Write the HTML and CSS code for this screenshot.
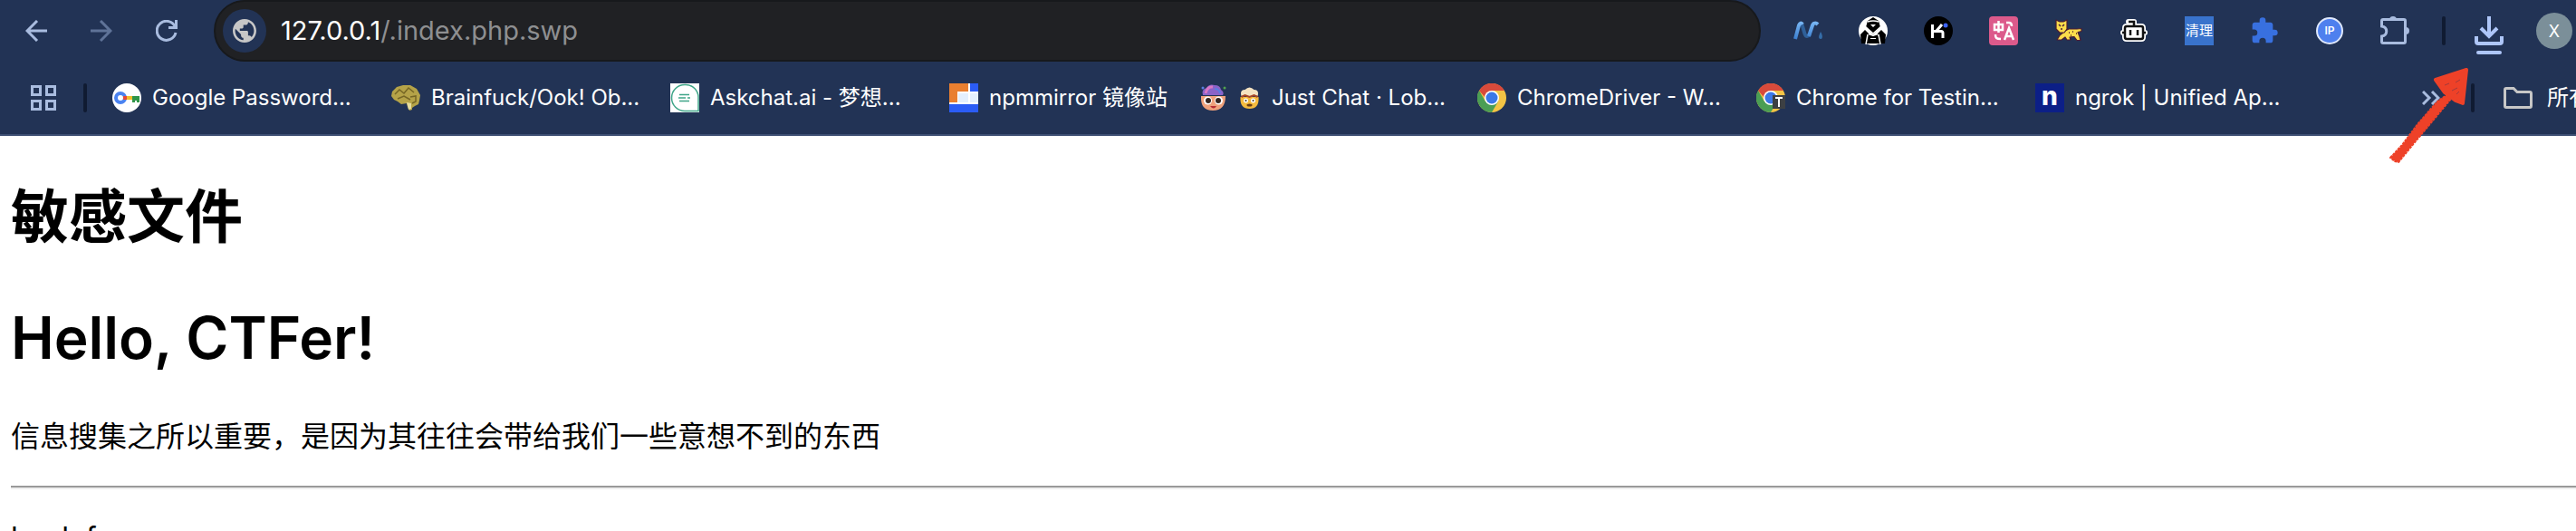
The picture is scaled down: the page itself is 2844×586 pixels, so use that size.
FILE: index.html
```html
<!DOCTYPE html>
<html lang="zh-CN">
<head>
<meta charset="utf-8">
<title>敏感文件</title>
<link rel="stylesheet" href="styles.css">
</head>
<body>
<header class="chrome">
  <div class="toolbar">
    <nav class="nav" aria-label="导航">
      <button class="icon-btn" aria-label="后退"><svg width="24" height="24" viewBox="0 0 24 24" fill="none" stroke="#a9bcdf" stroke-width="3"><path d="M24 12H2M13 1 2 12l11 11"/></svg></button>
      <button class="icon-btn" aria-label="前进"><svg width="24" height="24" viewBox="0 0 24 24" fill="none" stroke="#5f7398" stroke-width="3"><path d="M0 12h22M11 1l11 11-11 11"/></svg></button>
      <button class="icon-btn" aria-label="重新加载"><svg width="24" height="24" viewBox="0 0 24 24" fill="none" stroke="#a9bcdf" stroke-width="3"><path d="M21.500 8A10.500 10.500 0 1 0 22 14M22.500 0v8.500H14"/></svg></button>
    </nav>
    <div class="omnibox">
      <span class="site"><svg width="26" height="26" viewBox="2 2 20 20" fill="#c7c7c7"><path d="M12 2C6.480 2 2 6.480 2 12s4.480 10 10 10 10-4.480 10-10S17.520 2 12 2zm-1 17.930c-3.950-.49-7-3.850-7-7.930 0-.62.080-1.210.210-1.790L9 15v1c0 1.100.9 2 2 2v1.930zm6.900-2.540c-.26-.81-1-1.390-1.900-1.390h-1v-3c0-.55-.45-1-1-1H8v-2h2c.55 0 1-.45 1-1V7h2c1.100 0 2-.9 2-2v-.41c2.930 1.190 5 4.060 5 7.410 0 2.080-.8 3.970-2.100 5.390z"/></svg></span>
      <div class="url" role="textbox" aria-label="地址" tabindex="0">127.0.0.1<span class="path">/.index.php.swp</span></div>
    </div>
    <div class="extensions">
      <button class="icon-btn" aria-label="N"><svg width="32" height="32" viewBox="0 0 32 32" fill="none"><defs><linearGradient id="nb" gradientUnits="userSpaceOnUse" x1="0" y1="6" x2="0" y2="25"><stop stop-color="#7ab8f5"/><stop offset="1" stop-color="#3b7fd0"/></linearGradient></defs><path d="M7 8c4-2 4 14 8 14 2 0 3-2 3-4" stroke="#2f6099" stroke-width="4"/><path d="M2 25 6 10c1-3 3-3 4-1M17 22l4-12c1-3 4-3 6-1" stroke="url(#nb)" stroke-width="4"/><path d="M30 17c-3 6-2 8 0 8s3-3 0-8z" fill="#356da8"/></svg></button>
      <button class="icon-btn" aria-label="黑客"><svg width="32" height="32" viewBox="0 0 32 32"><circle cx="16" cy="16" r="16" fill="#fff"/><path d="M16 1 10 5 8 12l8 8 8-8-2-7z"/><path d="M2 20l5-5 4 4-3 11H3zM30 20l-5-5-4 4 3 11h5zM10 20l6 2 6-2 2 10H8z"/><path d="M10 6q6-2 12 0M7 11l9 8 9-8M8 31l2-11M24 31l-2-11" fill="none" stroke="#fff" stroke-width="1.500"/><path d="M13 9h6l-3 3zM13 24h6v1h-6z" fill="#fff"/></svg></button>
      <button class="icon-btn" aria-label="K"><svg width="32" height="32" viewBox="0 0 32 32"><circle cx="16" cy="16" r="16"/><path d="M9.500 9v15M10 16.500h9c2 0 2 1 2 2V24M14 16l6-7" fill="none" stroke="#fff" stroke-width="3"/><circle cx="24" cy="10" r="2.500" fill="#3d63f2"/></svg></button>
      <button class="icon-btn" aria-label="翻译"><svg width="32" height="32" viewBox="0 0 32 32"><rect width="32" height="32" rx="4" fill="#dc5a8b"/><path d="M6 9h9v6H6zM10.500 5v13M19 7h3c2 0 3 1 3 4M7 20c0 4 1 5 6 5M17 26l5-13 5 13M19 22h6" fill="none" stroke="#fff" stroke-width="2.500"/></svg></button>
      <button class="icon-btn" aria-label="猎豹"><svg width="32" height="32" viewBox="0 0 32 32"><g fill="#fbdc4b" stroke="#4c1d32" stroke-width="1.200" stroke-linejoin="round"><path d="M12 16l4-2h9l5-.5v3l-4 1 2 5 1 4h-4l-3-4-5 .5 1 3h-4l-2-3-4 3H3l3-5z"/><path d="M2 4l4 2h4l4-2v10l-3 4H6l-4-4z"/></g><path d="M5 9l2 2M11 9l-2 2M8 13v2M16 18h1M20 17h1M24 19h1M18 21h1" stroke="#4c1d32" stroke-width="1.500"/></svg></button>
      <button class="icon-btn" aria-label="机器人"><svg width="32" height="32" viewBox="0 0 32 32"><path d="M10 6h6v5M8 11h16q2 0 2 2v10q0 2-2 2H8q-2 0-2-2V13q0-2 2-2zM6 18H4M26 18h2" fill="#fff" stroke="#fff" stroke-width="6" stroke-linejoin="round" stroke-linecap="round"/><path d="M10 6h6v5M8 11h16q2 0 2 2v10q0 2-2 2H8q-2 0-2-2V13q0-2 2-2zM6 18H3M26 18h3M12 15v6M20 15v6" fill="none" stroke="#111" stroke-width="2.500"/></svg></button>
      <button class="clean">清理</button>
      <button class="icon-btn" aria-label="拼图"><svg width="32" height="32" viewBox="0 0 24 24" fill="#3870df"><path d="M20.500 11H19V7c0-1.100-.9-2-2-2h-4V3.500a2.500 2.500 0 0 0-5 0V5H4c-1.100 0-2 .9-2 2v3.800h1.500a2.700 2.700 0 0 1 0 5.400H2V20c0 1.100.9 2 2 2h3.800v-1.500a2.700 2.700 0 0 1 5.400 0V22H17c1.100 0 2-.9 2-2v-4h1.500a2.500 2.500 0 0 0 0-5z"/></svg></button>
      <button class="ip">IP</button>
      <button class="icon-btn" aria-label="扩展程序"><svg width="32" height="32" viewBox="0 0 32 32"><path d="M3 4.500h23q1.500 0 1.500 1.500v23q0 1.500-1.500 1.500H3q-1.500 0-1.500-1.500v-6c7-1 7-10 0-11V6q0-1.500 1.500-1.500z" transform="translate(0 -1)" fill="none" stroke="#a9bcdf" stroke-width="3"/><path d="M10 4a4 4 0 0 1 8 0zM28 12a4 4 0 0 1 0 8z" fill="#a9bcdf"/></svg></button>
    </div>
    <span class="divider"></span>
    <button class="icon-btn download" aria-label="下载"><svg width="32" height="42" viewBox="0 0 32 42" fill="none" stroke="#aec6f8" stroke-width="4"><path d="M16 0v21M7 13l9 9 9-9M2 22v6q0 2 2 2h24q2 0 2-2v-6"/><path d="M4 40h24" stroke-linecap="round"/></svg></button>
    <button class="avatar">X</button>
  </div>
  <nav class="bookmarks" aria-label="书签">
    <button class="icon-btn apps" aria-label="应用"><svg width="28" height="28" viewBox="0 0 28 28" fill="none" stroke="#a9bcdf" stroke-width="3"><path d="M1.500 1.500h9v9h-9zM17.500 1.500h9v9h-9zM1.500 17.500h9v9h-9zM17.500 17.500h9v9h-9z"/></svg></button>
    <span class="divider"></span>
    <div class="links">
      <a href="#"><svg width="32" height="32" viewBox="0 0 32 32"><circle cx="16" cy="16" r="16" fill="#fff"/><circle cx="9" cy="16" r="5" fill="none" stroke="#4b83f0" stroke-width="4"/><path d="M12 14h4v4h-4z" fill="#e5483a"/><path d="M16 14h7v4h-7z" fill="#f4bd2a"/><path d="M22 14h8v7h-3v-2h-2v2h-3z" fill="#2f9549"/></svg><span>Google Password...</span></a>
      <a href="#"><svg width="32" height="32" viewBox="0 0 32 32"><path d="M3 18 0 14l1-5 5-5 7-2h8l7 4 4 7-1 6-1 4-4 2-3 2v2l-3 1-2-4-1-4-6 1-4-3z" fill="#b5a348"/><path d="M4 12l5-5 5 4 5-6 6 5M7 17l7-3 7 4M21 15l6-1v6l-4 2" fill="none" stroke="#756625" stroke-width="1.500"/><path d="m17 21 2 8 3-1v-6z" fill="#e5dda0"/></svg><span>Brainfuck/Ook! Ob...</span></a>
      <a href="#"><svg width="32" height="32" viewBox="0 0 32 32"><path d="M0 0h32v32H0z" fill="#fff"/><path d="M16 1.500h1A14 14 0 0 1 31 16v14.500H16a14.500 14.500 0 0 1 0-29z" fill="none" stroke="#3fa588" stroke-width="1.500"/><path d="M10 12.500h11M9 16h8M19 16h3M10 19.500h11" stroke="#3fa588" stroke-width="1.500"/></svg><span>Askchat.ai - 梦想...</span></a>
      <a class="short" href="#"><svg width="32" height="32" viewBox="0 0 32 32"><path d="M0 0h32v32H0z" fill="#fff"/><path d="M0 0h21v9H9v12H0z" fill="#e97f30"/><path d="M23 0h9v9h-9zM0 23h32v9H0z" fill="#2b5cf5"/><path d="M10 11h11v10H10zM23 11h9v10h-9z" fill="#e4effd"/></svg><span>npmmirror 镜像站</span></a>
      <a href="#"><svg width="32" height="32" viewBox="0 0 32 32"><path d="M3 14h27q0 16-14 16T3 14z" fill="#f0a27c"/><path d="M5 13q-2-6 4-8 3-5 9-3 6 0 7 5 4 3 2 6z" fill="#8a63c8"/><path d="M8 11q2-8 8-7" fill="none" stroke="#d977c4" stroke-width="3"/><path d="M18 6q5 0 6 5" fill="none" stroke="#5a7de0" stroke-width="2"/><circle cx="29" cy="5" r="1.500" fill="#52a34d"/><circle cx="5" cy="5" r="1.500" fill="#5a7de0"/><circle cx="10.500" cy="19" r="4.500" fill="#fff"/><circle cx="22.500" cy="19" r="4.500" fill="#fff"/><circle cx="11" cy="19" r="3" fill="#35251f"/><circle cx="22" cy="19" r="3" fill="#35251f"/><path d="M13 25h7q-3 5-7 0z" fill="#b82d33"/></svg><svg width="25" height="26" viewBox="0 0 24 26"><path d="M2 12h20q1 13-10 13T2 12z" fill="#f5bb3e"/><path d="M3 11q-2-7 4-7 5-5 10 0 6 0 4 7l-4-1-5 2-5-2z" fill="#f5e3c1"/><path d="M3 12l4-2 5 2 5-2 4 2" fill="none" stroke="#a8472a" stroke-width="2"/><circle cx="8" cy="16" r="2.500" fill="#fff"/><circle cx="16" cy="16" r="2.500" fill="#fff"/><circle cx="8" cy="16" r="1" fill="#432"/><circle cx="16" cy="16" r="1" fill="#432"/><ellipse cx="12" cy="21" rx="3" ry="1.500" fill="#6b3d15"/></svg><span>Just Chat · Lob...</span></a>
      <a href="#"><svg width="32" height="32" viewBox="0 0 32 32"><g id="cr"><circle cx="16" cy="16" r="16" fill="#f3c445"/><path d="M2.100 8A16 16 0 0 1 29.900 8H16v8H9z" fill="#d84a3b"/><path d="M2.100 8A16 16 0 0 0 16 32l7-12-7-4-7 4z" fill="#4b9e54"/><circle cx="16" cy="16" r="8" fill="#fff"/><circle cx="16" cy="16" r="6.500" fill="#3b78e7"/></g></svg><span>ChromeDriver - W...</span></a>
      <a href="#"><svg width="32" height="32" viewBox="0 0 32 32"><use href="#cr"/><path d="M18 13h14v15H18z" fill="#3d4043"/><path d="M21 16h8M25 16v10" stroke="#fff" stroke-width="2"/></svg><span>Chrome for Testin...</span></a>
      <a href="#"><span class="ngrok">n</span><span>ngrok | Unified Ap...</span></a>
    </div>
    <button class="icon-btn more" aria-label="更多书签"><svg width="20" height="16" viewBox="0 0 20 16" fill="none" stroke="#a9bcdf" stroke-width="3"><path d="m1 1 7 7-7 7M11 1l7 7-7 7"/></svg></button>
    <span class="divider"></span>
    <a class="all" href="#"><svg width="32" height="24" viewBox="0 0 32 24" fill="none" stroke="#c7c7c7" stroke-width="3"><path d="M3 1.500h8l4 4h14q1.500 0 1.500 1.500v14q0 1.500-1.500 1.500H3q-1.500 0-1.500-1.500V3q0-1.500 1.500-1.500z"/></svg><span>所有书签</span></a>
  </nav>
  <svg class="arrow" width="90" height="106" viewBox="0 0 90 106" fill="#ee4128" stroke="#ee4128" stroke-linejoin="round"><path d="m1 99 13-14 18-24 21-24 10-7 5 4-15 18-25 30-18 22-4-1z" stroke-width="2" stroke-dasharray="3 1"/><path d="m51 13 34-11-4 37-8-3-12-9z" stroke-width="4"/><path d="m61 19 5-2m3 8 6-3m-2-6 5-3m-4 16 3-3" stroke="#a33a3b" stroke-width="1"/></svg>
</header>
<main class="page">
  <h1>敏感文件</h1>
  <h1>Hello, CTFer!</h1>
  <p>信息搜集之所以重要，是因为其往往会带给我们一些意想不到的东西</p>
  <hr>
  <p class="next">back f</p>
</main>
</body>
</html>
```

FILE: styles.css
```css
* { box-sizing: border-box; }
html, body { margin: 0; height: 100%; }
body { display: flex; flex-direction: column; overflow: hidden; background: #fff; color: #000; font-family: Inter, "Noto Sans CJK SC", sans-serif; }
button { padding: 0; border: 0; background: none; color: inherit; font: inherit; }
a { color: inherit; text-decoration: none; }
svg { display: block; flex: none; }
.chrome { position: relative; flex: none; background: #223355; border-bottom: 2px solid #3d4f73; color: #fff; }
.toolbar { display: flex; align-items: center; height: 68px; padding-right: 4px; }
.nav { display: flex; gap: 48px; padding: 0 40px 0 28px; }
.icon-btn { display: flex; flex: none; align-items: center; justify-content: center; }
.omnibox { display: flex; flex: 1; align-items: center; gap: 16px; height: 68px; padding: 0 8px; border: 2px solid #17191c; border-radius: 34px; background: #202124; }
.site { display: flex; flex: none; align-items: center; justify-content: center; width: 48px; height: 48px; border-radius: 50%; background: #223355; }
.url { flex: 1; font-size: 29px; line-height: 36px; white-space: nowrap; }
.path { color: #8e8f91; }
.extensions { display: flex; align-items: center; gap: 40px; padding: 0 36px; }
.clean { width: 32px; height: 32px; background: #3973cc; font-size: 15px; line-height: 32px; white-space: nowrap; }
.ip { width: 30px; height: 30px; margin: 0 1px; border: 2px solid #dfe8fc; border-radius: 50%; background: #4e80ee; font-size: 12px; font-weight: 600; line-height: 24px; }
.divider { flex: none; width: 4px; height: 32px; border-radius: 2px; background: #101b32; }
.download { align-self: flex-end; margin: 0 36px 8px 32px; }
.avatar { flex: none; width: 40px; height: 40px; border-radius: 50%; background: #7b8f99; font-size: 18px; }
.bookmarks { display: flex; align-items: center; height: 80px; overflow: hidden; font-size: 24px; line-height: 32px; white-space: nowrap; }
.apps { margin: 0 30px 0 34px; }
.links { display: flex; flex: 1; gap: 34px; padding-left: 28px; }
.links a { display: flex; flex: none; align-items: center; gap: 12px; width: 274px; }
.links .short { width: auto; }
.ngrok { width: 32px; height: 32px; background: #0c1f87; font-size: 28px; font-weight: 800; line-height: 28px; text-align: center; }
.more { margin-right: 34px; }
.all { display: flex; flex: none; align-items: center; gap: 16px; width: 112px; padding-left: 32px; }
.arrow { position: absolute; top: 75px; right: 116px; }
.page { flex: 1; min-height: 0; padding: 0 0 0 12px; overflow: hidden; font-size: 32px; }
.page h1 { margin: 44px 0 0; font-size: 64px; font-weight: 600; line-height: 90px; }
.page h1:first-child { font-weight: 700; }
.page p { margin: 42px 0 0; line-height: 44px; }
.page hr { margin: 32px 0 0; border: 0; border-top: 2px solid #999; border-bottom: 2px solid #eee; }
.page .next { margin-top: 32px; }
```
